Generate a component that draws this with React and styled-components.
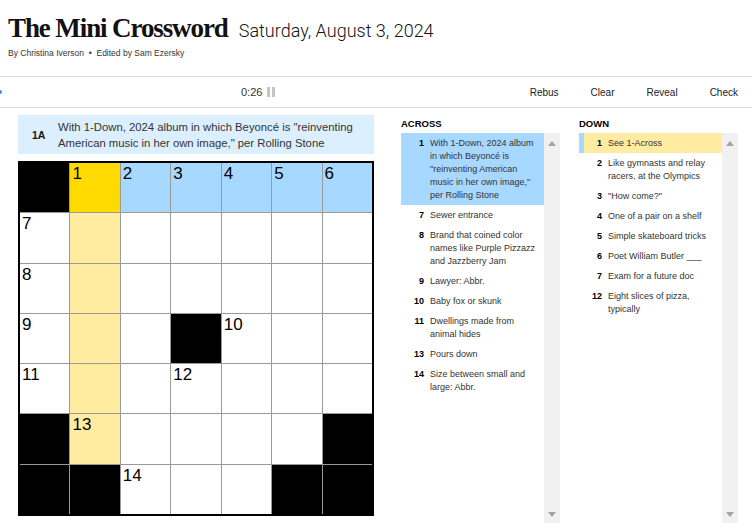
import React from 'react';
import styled, { createGlobalStyle } from 'styled-components';

const GlobalStyle = createGlobalStyle`
	body {
		margin: 0;
		background: #fff;
		font-family: 'Liberation Sans', Arial, sans-serif;
		color: #121212;
	}
`;

const Page = styled.div`
	width: 752px;
	height: 530px;
	overflow: hidden;
`;

const Header = styled.header`
	height: 76px;
	padding: 13px 8px 0;
	box-sizing: border-box;
`;

const TitleRow = styled.div`
	display: flex;
	align-items: baseline;
	gap: 11px;
`;

const Title = styled.h1`
	margin: 0;
	font-family: 'Liberation Serif', 'Times New Roman', serif;
	font-weight: 700;
	font-size: 27px;
	letter-spacing: -1.1px;
	line-height: 30px;
`;

const DateText = styled.span`
	font-family: Roboto, 'Liberation Sans', sans-serif;
	font-weight: 300;
	font-size: 18px;
	color: #121212;
`;

const Byline = styled.div`
	margin-top: 5px;
	font-size: 8.5px;
	color: #333;
`;

const Toolbar = styled.div`
	height: 30px;
	border-top: 1px solid #dcdcdc;
	border-bottom: 1px solid #dcdcdc;
	display: flex;
	align-items: center;
	padding-right: 14px;
`;

const Dot = styled.span`
	width: 4px;
	height: 4px;
	margin-left: -2px;
	border-radius: 50%;
	background: #4f85e5;
`;

const Timer = styled.div`
	margin-left: 239px;
	display: flex;
	align-items: center;
	gap: 5px;
	font-size: 11px;
	color: #333;
`;

const PauseBar = styled.span`
	width: 3px;
	height: 10px;
	background: #c4c4c4;
`;

const Pause = styled.span`
	display: flex;
	gap: 2px;
`;

const Actions = styled.div`
	margin-left: auto;
	display: flex;
	gap: 32px;
`;

const Action = styled.button`
	border: none;
	background: none;
	padding: 0;
	font-family: 'Liberation Sans', Arial, sans-serif;
	font-size: 10px;
	color: #222;
`;

const Content = styled.div`
	display: flex;
	padding: 7px 0 0 18px;
`;

const Board = styled.div`
	width: 356px;
	margin-right: 27px;
`;

const ClueBar = styled.div`
	height: 39px;
	background: #dcefff;
	display: flex;
	align-items: center;
	margin-bottom: 7px;
`;

const ClueLabel = styled.span`
	width: 40px;
	padding-left: 14px;
	box-sizing: border-box;
	font-weight: 700;
	font-size: 10.5px;
`;

const ClueText = styled.span`
	font-size: 11.3px;
	line-height: 16px;
	color: #333;
`;

const Grid = styled.div`
	width: 356px;
	height: 355px;
	box-sizing: border-box;
	border: 2px solid #000;
	background: #9a9a9a;
	display: grid;
	grid-template-columns: repeat(7, 1fr);
	grid-template-rows: repeat(7, 1fr);
	gap: 1px;
`;

const cellColors = {
	w: '#fff',
	b: '#000',
	s: '#ffda00',
	a: '#a7d8ff',
	d: '#ffeca0'
};

const Cell = styled.div`
	background: ${(p) => cellColors[p.$kind]};
	padding: 2px 0 0 2px;
	font-size: 17px;
	line-height: 18px;
	color: #000;
`;

const Panel = styled.section`
	width: 159px;
	margin-right: ${(p) => (p.$last ? 0 : 19)}px;
`;

const PanelTitle = styled.h3`
	margin: 0;
	height: 18px;
	padding-top: 3px;
	box-sizing: border-box;
	font-size: 9.5px;
	font-weight: 700;
	color: #000;
`;

const ListBox = styled.div`
	height: 390px;
	display: flex;
`;

const List = styled.ol`
	flex: 1;
	margin: 0;
	padding: 0;
	list-style: none;
`;

const Item = styled.li`
	display: flex;
	padding: 4px 4px 3px 0;
	background: ${(p) => (p.$active ? '#a7d8ff' : p.$linked ? '#ffeca0' : 'transparent')};
	box-shadow: ${(p) => (p.$linked ? 'inset 5px 0 0 #a7d8ff' : 'none')};
	font-size: 9px;
	line-height: 13px;
	color: #333;
`;

const Num = styled.span`
	width: 23px;
	flex-shrink: 0;
	text-align: right;
	margin-right: 6px;
	font-weight: 700;
	color: #000;
`;

const Scroll = styled.div`
	width: 16px;
	background: #f1f1f1;
	display: flex;
	flex-direction: column;
	justify-content: space-between;
	align-items: center;
	padding: 8px 0 6px;
	box-sizing: border-box;
`;

const Arrow = ({ down }) => (
	<svg width="8" height="5" viewBox="0 0 8 5">
		<path d={down ? 'M0 0h8L4 5z' : 'M0 5h8L4 0z'} fill="#a3a3a3" />
	</svg>
);

const layout = [
	['b', 's1', 'a2', 'a3', 'a4', 'a5', 'a6'],
	['w7', 'd', 'w', 'w', 'w', 'w', 'w'],
	['w8', 'd', 'w', 'w', 'w', 'w', 'w'],
	['w9', 'd', 'w', 'b', 'w10', 'w', 'w'],
	['w11', 'd', 'w', 'w12', 'w', 'w', 'w'],
	['b', 'd13', 'w', 'w', 'w', 'w', 'b'],
	['b', 'b', 'w14', 'w', 'w', 'b', 'b']
];

const across = [
	[1, 'With 1-Down, 2024 album in which Beyoncé is "reinventing American music in her own image," per Rolling Stone'],
	[7, 'Sewer entrance'],
	[8, 'Brand that coined color names like Purple Pizzazz and Jazzberry Jam'],
	[9, 'Lawyer: Abbr.'],
	[10, 'Baby fox or skunk'],
	[11, 'Dwellings made from animal hides'],
	[13, 'Pours down'],
	[14, 'Size between small and large: Abbr.']
];

const down = [
	[1, 'See 1-Across'],
	[2, 'Like gymnasts and relay racers, at the Olympics'],
	[3, '"How come?"'],
	[4, 'One of a pair on a shelf'],
	[5, 'Simple skateboard tricks'],
	[6, 'Poet William Butler ___'],
	[7, 'Exam for a future doc'],
	[12, 'Eight slices of pizza, typically']
];

const ClueList = ({ title, clues, active, linked, last }) => (
	<Panel $last={last}>
		<PanelTitle>{title}</PanelTitle>
		<ListBox>
			<List>
				{clues.map(([n, text]) => (
					<Item key={n} $active={n === active} $linked={n === linked}>
						<Num>{n}</Num>
						<span>{text}</span>
					</Item>
				))}
			</List>
			<Scroll>
				<Arrow />
				<Arrow down />
			</Scroll>
		</ListBox>
	</Panel>
);

export default function App() {
	return (
		<Page>
			<GlobalStyle />
			<Header>
				<TitleRow>
					<Title>The Mini Crossword</Title>
					<DateText>Saturday, August 3, 2024</DateText>
				</TitleRow>
				<Byline>By Christina Iverson &nbsp;•&nbsp; Edited by Sam Ezersky</Byline>
			</Header>
			<Toolbar>
				<Dot />
				<Timer>
					0:26
					<Pause>
						<PauseBar />
						<PauseBar />
					</Pause>
				</Timer>
				<Actions>
					<Action>Rebus</Action>
					<Action>Clear</Action>
					<Action>Reveal</Action>
					<Action>Check</Action>
				</Actions>
			</Toolbar>
			<Content>
				<Board>
					<ClueBar>
						<ClueLabel>1A</ClueLabel>
						<ClueText>
							With 1-Down, 2024 album in which Beyoncé is "reinventing
							<br />
							American music in her own image," per Rolling Stone
						</ClueText>
					</ClueBar>
					<Grid>
						{layout.flat().map((c, i) => (
							<Cell key={i} $kind={c[0]}>
								{c.slice(1)}
							</Cell>
						))}
					</Grid>
				</Board>
				<ClueList title="ACROSS" clues={across} active={1} />
				<ClueList title="DOWN" clues={down} linked={1} last />
			</Content>
		</Page>
	);
}
